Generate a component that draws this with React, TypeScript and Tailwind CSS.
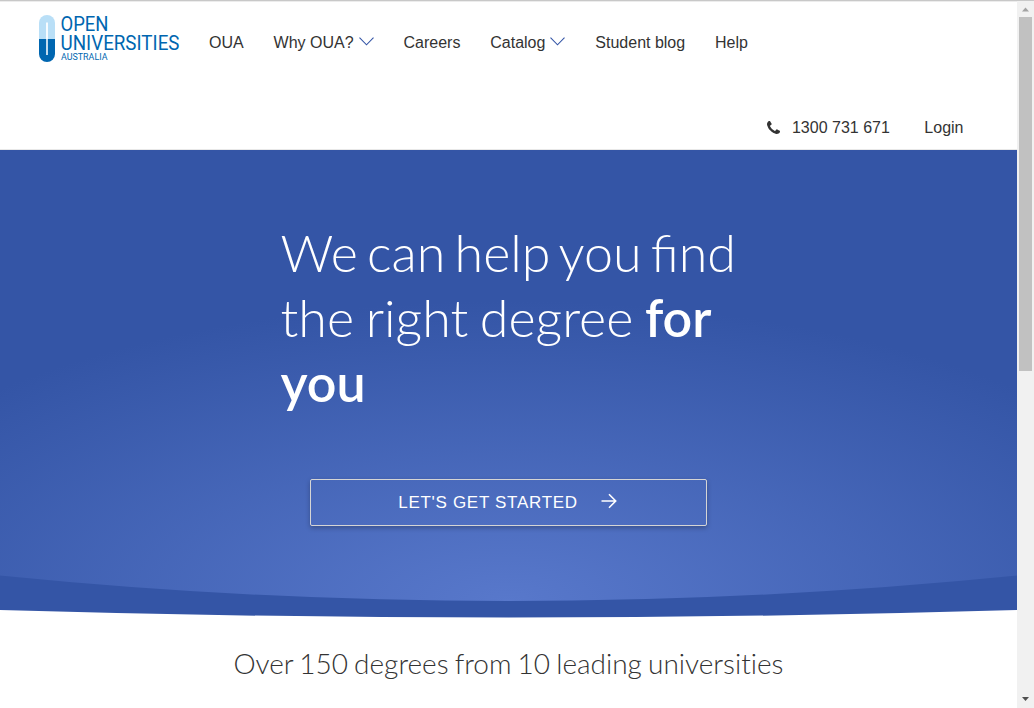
import React from "react";

function Logo() {
  return (
    <svg width="146" height="50" viewBox="0 0 146 50" className="mt-[13px] ml-[39px] block shrink-0" role="img" aria-label="Open Universities Australia">
      <path d="M0 25V9a8 8 0 0 1 16 0v16z" fill="#b9dff7" />
      <path d="M0 25h16v15a8 8 0 0 1-16 0z" fill="#0066b0" />
      <path d="M8 8.500v16.500" stroke="#fff" strokeWidth="1.8" fill="none" />
      <path d="M8 25v16" stroke="#d7e8f5" strokeWidth="1.8" fill="none" />
      <g fill="#0066b0" className="font-['Roboto',sans-serif]">
        <text x="21.500" y="17.200" fontSize="19.700" textLength="48" lengthAdjust="spacingAndGlyphs">OPEN</text>
        <text x="21.500" y="35.500" fontSize="19.700" textLength="119" lengthAdjust="spacingAndGlyphs">UNIVERSITIES</text>
        <text x="22" y="45.500" fontSize="8.500" textLength="46.500" lengthAdjust="spacingAndGlyphs">AUSTRALIA</text>
      </g>
    </svg>
  );
}

function Chevron() {
  return (
    <svg width="15" height="9" viewBox="0 0 15 9" className="mb-[3px] ml-[5px] block" fill="none" stroke="#3455a6" strokeWidth="1.1">
      <path d="M0.5 0.6L7.5 7.8L14.5 0.6" />
    </svg>
  );
}

function NavItem({ label, menu = false }: { label: string; menu?: boolean }) {
  return (
    <a className="flex items-center whitespace-nowrap">
      {label}
      {menu && <Chevron />}
    </a>
  );
}

function Header() {
  return (
    <header className="flex h-[149px] flex-col border-t border-b border-t-[#ececec] border-b-[#e8e8e8] text-base leading-6 text-[#333]">
      <div className="-mt-px flex h-[84px] items-start">
        <Logo />
        <nav className="mt-[30px] ml-[24px] flex gap-[29.9px]">
          <NavItem label="OUA" />
          <NavItem label="Why OUA?" menu />
          <NavItem label="Careers" />
          <NavItem label="Catalog" menu />
          <NavItem label="Student blog" />
          <NavItem label="Help" />
        </nav>
      </div>
      <div className="mt-[31px] flex items-center justify-end pr-[53.5px]">
        <svg width="13" height="13" viewBox="0 0 1408 1408" className="mr-3 mb-[2px] block" fill="#333">
          <path d="M1408 1112q0 27-10 70.500t-21 68.500q-21 50-122 106-94 51-186 51-27 0-53-3.500t-57.500-12.500-47-14.500-55.500-20.500-49-18q-98-35-175-83-127-79-264-216t-216-264q-48-77-83-175-3-9-18-49t-20.500-55.500-14.500-47-12.500-57.500-3.500-53q0-92 51-186 56-101 106-122 25-11 68.500-21t70.500-10q14 0 21 3 18 6 53 76 11 19 30 54t35 63.500 31 53.500q3 4 17.500 25t21.500 35.500 7 28.500q0 20-28.500 50t-62 55-62 53-28.500 46q0 9 5 22.500t8.500 20.500 14 24 11.500 19q76 137 174 235t235 174q2 1 19 11.500t24 14 20.500 8.500 22.500 5q18 0 46-28.500t53-62 55-62 50-28.500q14 0 28.500 7t35.500 21.500 25 17.500q25 15 53.500 31t63.500 35 54 30q70 35 76 53 3 7 3 21z" />
        </svg>
        <span>1300 731 671</span>
        <span className="ml-[34.5px]">Login</span>
      </div>
    </header>
  );
}

function HeroBackdrop() {
  return (
    <svg className="absolute inset-0 block" width="1017" height="468" viewBox="0 0 1017 468">
      <defs>
        <radialGradient id="glow" gradientUnits="userSpaceOnUse" cx="0" cy="0" r="1" gradientTransform="translate(508.5 451) scale(720 300)">
          <stop offset="0" stopColor="#5878cb" />
          <stop offset="1" stopColor="#3455a6" />
        </radialGradient>
      </defs>
      <path d="M0 0H1017V460Q508.500 475 0 460Z" fill="#3455a6" />
      <path d="M0 0H1017V425.500Q508.500 476.500 0 425.500Z" fill="url(#glow)" />
    </svg>
  );
}

function Hero() {
  return (
    <section className="relative h-[468px]">
      <HeroBackdrop />
      <div className="relative flex flex-col items-center pt-[70px]">
        <h1 className="w-[456px] font-['Lato',sans-serif] text-[52px] leading-[65px] font-light whitespace-nowrap text-white">
          <span className="block [word-spacing:-4.9px]">We can help you find</span>
          <span className="block [word-spacing:-2.5px]">
            the right degree <strong className="font-semibold">for</strong>
          </span>
          <strong className="block font-semibold">you</strong>
        </h1>
        <button className="mt-[64px] flex h-[47px] w-[397px] items-center justify-center rounded-[2px] border border-[#d5d5d5] pr-[2px] text-[17px] tracking-[0.7px] text-white shadow-[0_2px_5px_rgba(0,0,0,0.26)]">
          <span>LET'S GET STARTED</span>
          <svg width="16" height="16" viewBox="0 0 16 16" className="mb-[3px] ml-[23px] block" fill="none" stroke="#fff" strokeWidth="1.6">
            <path d="M0.500 8H14.500M8 1.200L14.700 8L8 14.800" />
          </svg>
        </button>
      </div>
    </section>
  );
}

function Scrollbar() {
  return (
    <aside className="flex h-full w-[17px] shrink-0 flex-col items-center bg-[#f1f1f1]">
      <svg width="17" height="16" viewBox="0 0 17 16" className="block shrink-0" fill="#a3a3a3">
        <path d="M5 10.500H12L8.500 6.500Z" />
      </svg>
      <div className="h-[354px] w-[13px] bg-[#c1c1c1]" />
      <svg width="17" height="17" viewBox="0 0 17 17" className="mt-auto block shrink-0" fill="#505050">
        <path d="M5 6H12L8.500 10Z" />
      </svg>
    </aside>
  );
}

export default function App() {
  return (
    <div className="flex h-[708px] w-[1034px] overflow-hidden border-t border-[#c8c8c8] bg-white font-['Liberation_Sans',Arial,sans-serif]">
      <main className="w-[1017px] shrink-0">
        <Header />
        <Hero />
        <h2 className="mt-[27px] text-center font-['Lato',sans-serif] text-[28px] leading-9 font-light [font-variant-ligatures:none] [word-spacing:-1.5px] text-[#333]">
          Over 150 degrees from 10 leading universities
        </h2>
      </main>
      <Scrollbar />
    </div>
  );
}
